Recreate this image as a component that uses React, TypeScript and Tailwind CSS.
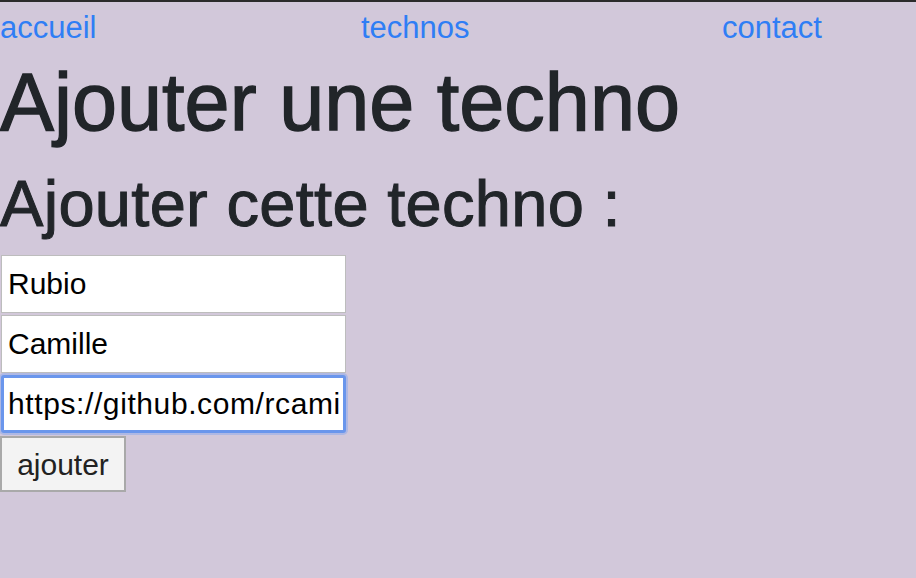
import React from "react";

export default function App() {
  const font = { fontFamily: '"Liberation Sans", Arial, sans-serif' };
  return (
    <div className="min-h-[578px] w-[916px] bg-[#d2c8da] border-t-2 border-[#2b2b2b] text-[#212529]" style={font}>
      <nav className="flex h-[50px] items-center text-[31px] leading-none text-[#2f7ef5]">
        <a className="w-[361px]" href="#">accueil</a>
        <a className="w-[361px]" href="#">technos</a>
        <a className="w-[194px]" href="#">contact</a>
      </nav>
      <h1 className="text-[81px] leading-[89px] mt-[6px] [-webkit-text-stroke:1.3px_#212529]">Ajouter une techno</h1>
      <h2 className="text-[65px] leading-[72px] mt-[21px] tracking-[0.3px] [-webkit-text-stroke:1px_#212529]">Ajouter cette techno :</h2>
      <form className="flex flex-col items-start mt-[15px] pl-[1px]">
        <input className="w-[345px] h-[58px] bg-white border border-[#bdbdbd] px-[6px] text-[30px] text-black" defaultValue="Rubio" />
        <input className="w-[345px] h-[58px] mt-[2px] bg-white border border-[#bdbdbd] px-[6px] text-[30px] text-black" defaultValue="Camille" />
        <input className="w-[345px] h-[58px] mt-[2px] bg-white border-[3px] border-[#6a96ec] rounded-[3px] px-[4px] text-[30px] tracking-[0.6px] text-black outline-none shadow-[0_0_0_2px_rgba(130,165,240,0.45)]" defaultValue="https://github.com/rcamille" />
        <button className="mt-[3px] -ml-[1px] w-[126px] h-[56px] bg-[#f3f3f3] border-2 border-[#a9a9a9] text-[30px] text-[#222]">ajouter</button>
      </form>
    </div>
  );
}
